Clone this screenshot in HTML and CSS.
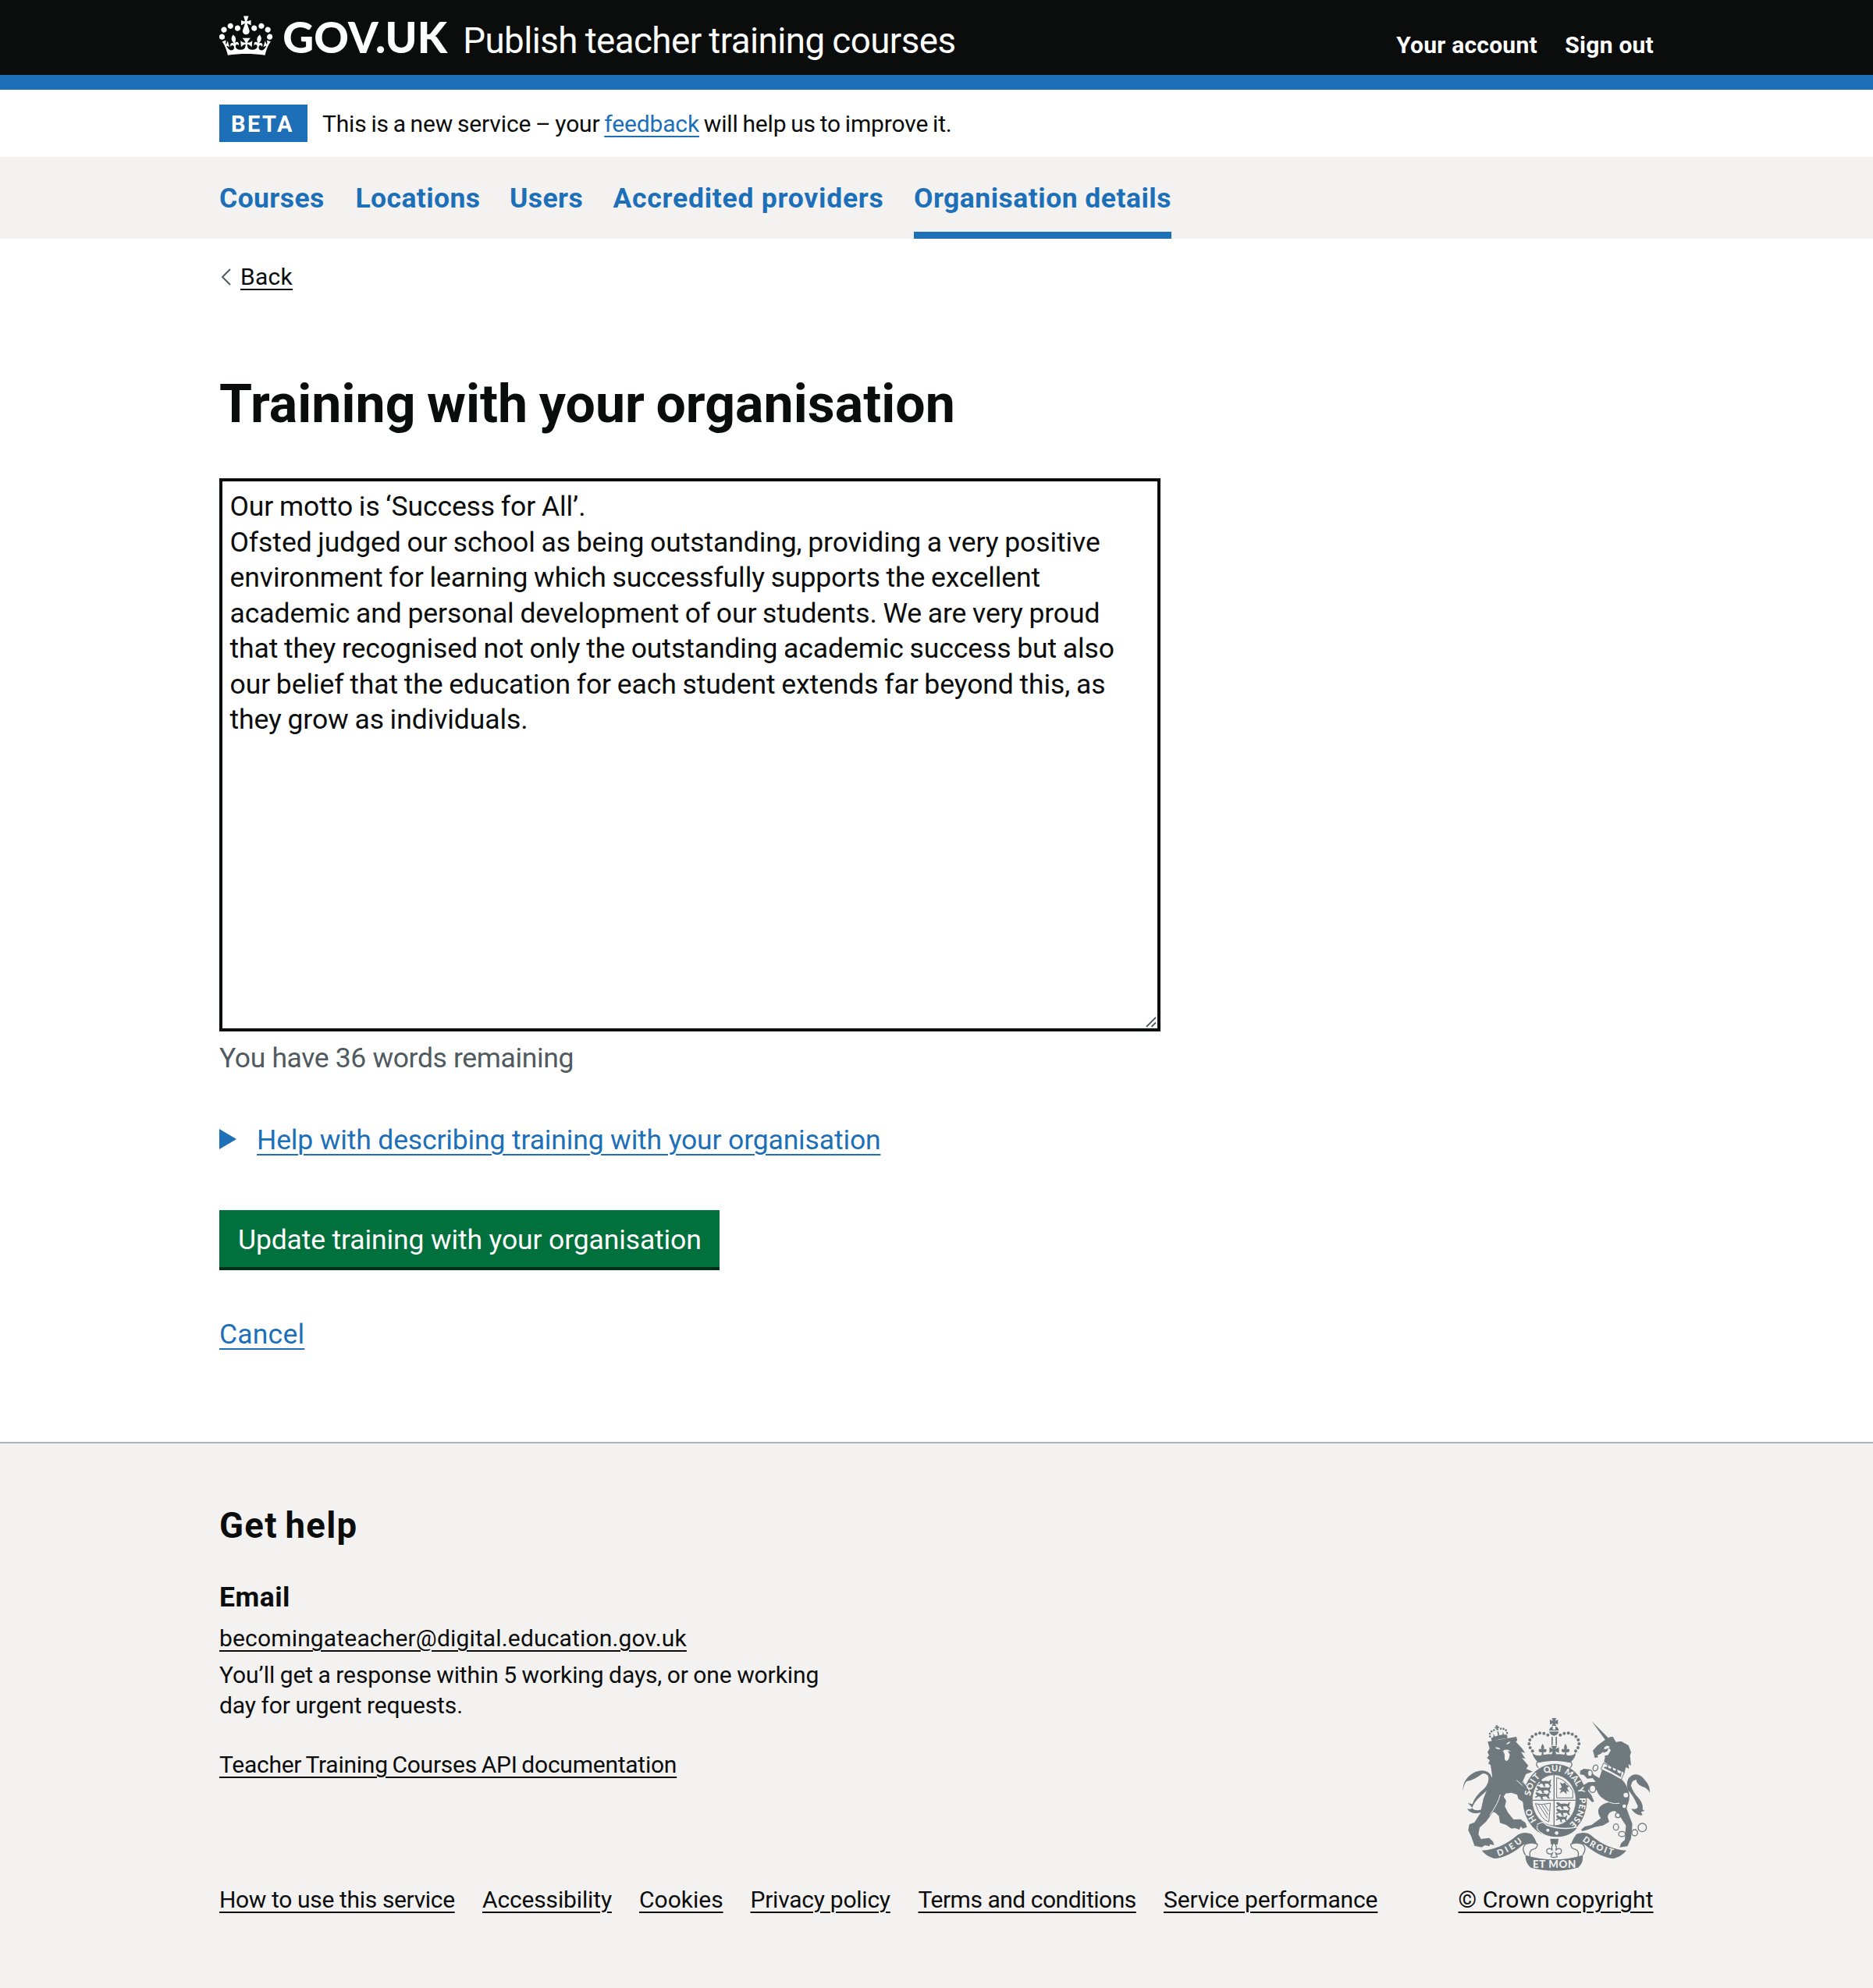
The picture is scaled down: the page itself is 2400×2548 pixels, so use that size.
FILE: index.html
```html
<!DOCTYPE html>
<html lang="en">
<head>
<meta charset="utf-8">
<title>Training with your organisation</title>
<link rel="stylesheet" href="styles.css">
</head>
<body>
<header class="header">
  <div class="container header-inner">
    <svg class="logo" viewBox="0 3 156 34" role="img" aria-label="GOV.UK">
      <path fill="#fff" d="M6.7 12.2c1 .4 2.1-.1 2.5-1s-.1-2.1-1-2.5c-1-.4-2.1.1-2.5 1-.4 1 0 2.1 1 2.5m-4.3 2.5c1 .4 2.1-.1 2.5-1s-.1-2.1-1-2.5c-1-.4-2.1.1-2.5 1-.5 1 0 2.1 1 2.5m-1.3 4.8c1 .4 2.1-.1 2.5-1s-.1-2.1-1-2.5c-1-.4-2.1.1-2.5 1-.4 1 0 2.1 1 2.5m10.4-5.8c1 .4 2.1-.1 2.5-1s-.1-2.1-1-2.5c-1-.4-2.1.1-2.5 1s0 2.1 1 2.5m17.4-1.5c-1 .4-2.1-.1-2.5-1s.1-2.1 1-2.5c1-.4 2.1.1 2.5 1 .5 1 0 2.1-1 2.5m4.3 2.5c-1 .4-2.1-.1-2.5-1s.1-2.1 1-2.5c1-.4 2.1.1 2.5 1 .5 1 0 2.1-1 2.5m1.3 4.8c-1 .4-2.1-.1-2.5-1s.1-2.1 1-2.5c1-.4 2.1.1 2.5 1 .4 1 0 2.1-1 2.5m-10.4-5.8c-1 .4-2.1-.1-2.5-1s.1-2.1 1-2.5c1-.4 2.1.1 2.5 1s0 2.1-1 2.5m-5.3-4.9 2.4 1.3V6.5l-2.4.8c-.1-.1-.1-.1-.2-.1s1-3.400 1-3.400h-3.400l1 3.400c-.1.1-.2.1-.2.1-.1.1-2.400-.7-2.400-.7v3.500L17 8.800c-.1.1 0 .2.1.3l-1.400 4.200c-.1.2-.1.4-.1.7 0 1.100.8 2.100 1.900 2.200h.8c1.100-.2 1.900-1.100 1.900-2.200 0-.2 0-.4-.1-.7l-1.400-4.200c.1-.1.2-.2.1-.3m-1 20.300c4.600 0 8.900.3 12.800.9 1.100-4.600 2.400-7.200 3.800-9.100l-2.600-.9c.3 1.300.3 1.900 0 2.800-.4-.4-.8-1.200-1.100-2.400l-1.200 4.200c.8-.5 1.300-.9 2-.9-1.200 2.600-2.700 3.200-3.600 3-1.200-.2-1.700-1.300-1.500-2.200.3-1.300 1.600-1.600 2.200-.1 1.200-2.400-.8-3.100-2.100-2.400 1.900-1.900 2.200-3.600.6-5.700-2.200 1.700-2.200 3.300-1.200 5.600-1.300-1.500-3.300-.7-2.500 1.700.9-1.500 2.100-.5 2 .8-.2 1.200-1.700 2.100-3.700 2-2.800-.2-3-2.200-3-3.700.7-.1 1.900.5 3 2l.4-4.400c-1.100 1.200-2.200 1.400-3.300 1.400.4-1.200 2.100-3.100 2.100-3.100h-5.500s1.800 1.900 2.100 3.100c-1.100 0-2.200-.3-3.300-1.400l.4 4.400c1.100-1.500 2.200-2.100 3-2-.1 1.600-.2 3.500-3 3.700-1.900.2-3.500-.8-3.700-2-.2-1.300 1-2.300 2-.8.7-2.300-1.300-3.100-2.500-1.700 1-2.300 1-4-1.200-5.600-1.600 2.100-1.300 3.800.6 5.700-1.300-.7-3.200 0-2.100 2.400.6-1.500 1.900-1.200 2.200.1.2.9-.3 2-1.500 2.200-.9.2-2.400-.5-3.600-3 .7 0 1.200.4 2 .9l-1.200-4.200c-.3 1.200-.7 2-1.100 2.400-.3-.8-.2-1.500 0-2.800l-2.600.9c1.400 1.900 2.700 4.600 3.800 9.100 3.900-.6 8.200-.9 12.800-.9"/>
      <text class="logotype" x="42.4" y="28.6" textLength="110.2">GOV.UK</text>
    </svg>
    <a class="service-name" href="#">Publish teacher training courses</a>
    <nav class="account">
      <a href="#">Your account</a>
      <a href="#">Sign out</a>
    </nav>
  </div>
</header>

<div class="container phase-banner">
  <strong class="tag">BETA</strong>
  <p class="phase-text">This is a new service – your <a class="link" href="#">feedback</a> will help us to improve it.</p>
</div>

<nav class="primary-nav">
  <ul class="container primary-list">
    <li class="nav-courses"><a href="#">Courses</a></li>
    <li class="nav-locations"><a href="#">Locations</a></li>
    <li class="nav-users"><a href="#">Users</a></li>
    <li class="nav-providers"><a href="#">Accredited providers</a></li>
    <li class="nav-organisation current"><a href="#">Organisation details</a></li>
  </ul>
</nav>

<main class="container main">
  <div class="back">
    <svg class="chevron" viewBox="0 0 14 22"><path d="M13 1 3 11l10 10"/></svg>
    <a class="link" href="#">Back</a>
  </div>
  <h1 class="title">Training with your organisation</h1>
  <div class="field">
    <textarea class="textarea" aria-label="Training with your organisation">Our motto is ‘Success for All’.
Ofsted judged our school as being outstanding, providing a very positive
environment for learning which successfully supports the excellent
academic and personal development of our students. We are very proud
that they recognised not only the outstanding academic success but also
our belief that the education for each student extends far beyond this, as
they grow as individuals.</textarea>
    <svg class="grip" viewBox="0 0 14 14"><path d="M1 13 13 1M7.500 13 13 7.500"/></svg>
  </div>
  <p class="hint">You have 36 words remaining</p>
  <div class="details">
    <svg class="arrow" viewBox="0 0 22 26"><path d="M0 0 22 13 0 26z"/></svg>
    <a class="link" href="#">Help with describing training with your organisation</a>
  </div>
  <button class="button">Update training with your organisation</button>
  <p class="cancel"><a class="link" href="#">Cancel</a></p>
</main>

<footer class="footer">
  <div class="container">
    <h2 class="help-title">Get help</h2>
    <h3 class="help-subtitle">Email</h3>
    <p class="help-email"><a class="link" href="#">becomingateacher@digital.education.gov.uk</a></p>
    <p class="help-text">You’ll get a response within 5 working days, or one working<br>day for urgent requests.</p>
    <div class="footer-meta">
      <div class="meta-main">
        <p class="api"><a class="link" href="#">Teacher Training Courses API documentation</a></p>
        <ul class="footer-links">
          <li class="f-how"><a class="link" href="#">How to use this service</a></li>
          <li class="f-access"><a class="link" href="#">Accessibility</a></li>
          <li class="f-cookies"><a class="link" href="#">Cookies</a></li>
          <li class="f-privacy"><a class="link" href="#">Privacy policy</a></li>
          <li class="f-terms"><a class="link" href="#">Terms and conditions</a></li>
          <li class="f-perf"><a class="link" href="#">Service performance</a></li>
        </ul>
      </div>
      <div class="meta-crown">
        <svg class="crest" viewBox="85 55 750 600">
          <defs>
            <path id="garter" d="M455 490A95 112 0 0 1 360 378A95 112 0 0 1 455 266A95 112 0 0 1 550 378A95 112 0 0 1 455 490"/>
            <path id="ribbon-left" d="M238 592Q290 575 345 526"/>
            <path id="ribbon-right" d="M560 533Q610 572 690 592"/>
            <g id="bead-arc"><circle cx="428" cy="126" r="6"/><circle cx="413" cy="120" r="6"/><circle cx="397" cy="119" r="6"/><circle cx="382" cy="123" r="6"/><circle cx="368" cy="132" r="6"/><circle cx="359" cy="145" r="6"/><circle cx="356" cy="160" r="6"/><circle cx="360" cy="175" r="6"/><circle cx="369" cy="188" r="6"/>
              <path d="M408 160q-9 12-4 22q-9-6-12 4q4 10 14 6l-3 12h10l-3-12q10 4 14-6q-3-10-12-4q5-10-4-22z"/></g>
            <g id="passant"><path d="M2 8q-4-6 2-8l6 3 5 4q12-3 22 1 3-9 9-8-4 4-3 10l-2 8 5 8h-7l-5-9-11 1-1 6 4 5h-8l-3-10-6-2-7 6-4-4 8-5z"/></g>
          </defs>
          <!-- centre crown -->
          <g class="ink">
            <path d="M443 61h18l-5 11 11-5v19l-11-5 5 10h-18l5-10-12 5V67l12 5zM433 109q2-14 14-16v12h10V93q12 2 13 16zM433 113h37q-3 14-18 16-15-2-19-16z"/>
            <path d="M442 133h5v32h-5zM458 133h5v32h-5zM440 168h24l-7 12 14-7v22l-14-6 5 14h-20l5-14-13 6v-22l13 7z"/>
            <use href="#bead-arc"/><use href="#bead-arc" transform="translate(904) scale(-1 1)"/>
            <path d="M368 192q8 16 36 12 26-8 48-2 24-6 50 2 26 4 34-12-2 24-22 40-62-14-122 0-20-16-24-40z"/>
          </g>
          <path class="line" d="M392 252q-12-10-5-21 66-16 130 0 9 10-4 21"/>
          <!-- lion -->
          <g class="ink">
            <path d="M197 152l22-4 88-15 4 14-6 5 24 26 12 17-16-4 17 27-14-4 25 30-8 12 25 11-26 9-12 27 24 30 18 31-3 32-10 8-10-8-8 4-12-18-16-10-5-16-22-8-22 3-8 12 10 16-5 22 11 22 22 28 28-1 18 14 6 16-16 6-8-8-6 12-16-6-14 2-20-14-24-8-4-26-12-12-10-4-28 38-24 22-5 26 10 18 32-4 14 14 5 14-16-4-2 8-18-4-12 8-28-6-12-34-12-26 4-22 20-8 22-34 12-56 18-46 16-42-6-42-9-6 6-12-11-10 8-10-6-12 8-14z"/>
            <path d="M186 418q-50 22-68-8 22 4 18-6l-15-16 17 4q10-32 46-60 22-26 14-50-12-12-24-6-30 24-58 28-14 14-13 38-6-30 22-58 30-26 62-20 34 10 22 52-10 22-38 44-28 24-34 48 16 14 43 2z"/>
            <g transform="rotate(-12 240 130)"><path d="M208 132q34-9 64 0l-2 14q-30-6-60 0zM235 88h9l-2 6 6-1v7l-6-1 2 8h-9l2-8-6 1v-7l6 1zM237 112h5v20h-5zM221 116l4 16h-7zM258 116l3 16h-7z"/>
              <circle cx="226" cy="104" r="4"/><circle cx="216" cy="107" r="4"/><circle cx="208" cy="114" r="4"/><circle cx="206" cy="125" r="4"/><circle cx="253" cy="104" r="4"/><circle cx="263" cy="107" r="4"/><circle cx="271" cy="114" r="4"/><circle cx="273" cy="125" r="4"/></g>
          </g>
          <path class="paper" d="M225 174q12-3 21 6-12 4-21-6zM267 163q9-12 17-11-4 10-17 11zM248 188q8 4 12-4 16-4 26 6l-12-2 8 14-4 16q-8 16-16 1v-16l-4-12z"/>
          <path class="cut" d="M245 355q-6 30-40 80M308 300l24 22 20 30"/>
          <!-- unicorn -->
          <g class="ink">
            <path d="M597 74l72 72-12 10z"/>
            <path d="M678 133l12 20 20-3 28 16 10 26-4 14 4 38-10-6 2 18-12-6-6 24q-36-16-78-44l4-20q-8-10-6-20-12 12-24 14l4 8-14 2-3-14-4-14 18-20 28-20 20-12z"/>
            <path d="M637 258q40 16 74 38 26 26 30 60 2 30-12 48l24 64-5 56-14 30-30 4 6-16 14-12 4-56-26-40-16-16q-26 2-28 24l6 18-24 14-32 6-26 10-22 6-4-6 14-12 26-6 36-26q-18-26-4-44 12-14 38-18-42-14-50-46l-26-8-8 10 14 18 10 24-8 2-14-14-20-6-4-20 6-26 18-10 28-2-12-14-20 2-14-14-14-2 0-14 14-8 22 2 18 22 20 12z"/>
            <path d="M790 434q-22 4-42-24 26 4 26-10-18-42-38-62-12-40 14-56 28-14 52 18 20 22 18 48-10-20-30-24-22-10-22-26-18 2-20 24 8 26 30 48 18 22 14 42l8 6-14 4 6 12-18 6z"/>
          </g>
          <path class="paper" d="M644 176q10-14 22-4-6 8-20 10zM632 199l24-10 6-14 8 10-10 18-18 4z"/>
          <path class="collar" d="M642 234q40 18 80 36l-12 28q-38-24-78-40z"/>
          <path class="ink" d="M648 247l6 4 3-12 4 14 9 3 5-14 4 18 8 4 6-12 4 18 9 4 6-10-3 24q-30-18-66-36z"/>
          <path class="cut" d="M664 385q18 8 40 4"/>
          <g class="link-ring"><ellipse cx="611" cy="253" rx="9" ry="12" transform="rotate(25 611 253)"/><ellipse cx="590" cy="273" rx="9" ry="12"/><ellipse cx="600" cy="333" rx="12" ry="14"/><circle cx="728" cy="357" r="11"/><circle cx="722" cy="400" r="9"/><circle cx="697" cy="435" r="9"/><ellipse cx="690" cy="480" rx="10" ry="12"/><ellipse cx="713" cy="507" rx="13" ry="10"/><ellipse cx="762" cy="502" rx="11" ry="12"/><circle cx="791" cy="482" r="16"/></g>
          <!-- garter and shield -->
          <ellipse class="ink" cx="455" cy="378" rx="123" ry="141"/>
          <ellipse class="shield" cx="452" cy="377" rx="84" ry="98"/>
          <path class="line" d="M452 279v196M368 377h168"/>
          <g class="ink">
            <use href="#passant" transform="translate(392 297) scale(1.100 .95)"/><use href="#passant" transform="translate(384 322) scale(1.250 .95)"/><use href="#passant" transform="translate(380 346) scale(1.250 .95)"/>
            <use href="#passant" transform="translate(460 384) scale(1.200 .95)"/><use href="#passant" transform="translate(460 409) scale(1.200 .95)"/><use href="#passant" transform="translate(460 434) scale(.95)"/>
            <path d="M474 308l12 6 8-6 6 10 10 5-8 8 9 14-12-4 2 13-13-11-15 8 7-14-10-3 12-7z"/>
          </g>
          <path class="fine" d="M462 290q40 10 62 52v26h-62zM380 390q20 6 58-2l-6 72q-30-6-52-70zM392 394l34 52M403 393l26 40M414 392l17 26"/>
          <path class="cut" d="M330 306q22 14 30 46"/>
          <path class="ink" d="M306 310l30 14 30 62-2 14-14-2-10 6z"/>
          <g class="motto">
            <text><textPath href="#garter" startOffset="81">HO</textPath></text>
            <text><textPath href="#garter" startOffset="180" textLength="84">SOIT</textPath></text>
            <text><textPath href="#garter" startOffset="285" textLength="62">QUI</textPath></text>
            <text><textPath href="#garter" startOffset="361" textLength="72">MAL</textPath></text>
            <text><textPath href="#garter" startOffset="440">Y</textPath></text>
            <text><textPath href="#garter" startOffset="478" textLength="112">PENSE</textPath></text>
          </g>
          <path class="strap" d="M388 470q22-16 34 2 60 22 124 8-30 42-90 40-34-2-54-18-22-10-14-32z"/>
          <circle class="paper" cx="428" cy="492" r="6"/><circle class="paper" cx="462" cy="503" r="7"/>
          <path class="fine" d="M388 470q-12 14 4 28M398 474q-8 10 2 22"/>
          <!-- ribbon -->
          <path class="ink" d="M437 525h32l-3 22h-26z"/>
          <path class="fleur" d="M452 540q-14 16-6 30-12-14-22-2-4 16 16 16l6-4-6 14q12 6 24 0l-6-14 6 4q20 0 16-16-10-12-22 2 8-14-6-30z"/>
          <path class="ink" d="M174 570q74-4 138-60 22-14 54-3 12 14 20 36-30-8-54 6-60 50-110 52-30-8-48-31zM730 570q-74-4-138-60-22-14-54-3-12 14-20 36 30-8 54 6 60 50 110 52 30-8 48-31zM342 588q110 34 220 0 4 30-18 48-90 24-182 0-22-20-20-48z"/>
          <path class="line" d="M342 588q-18-26 0-42 24-10 46 0 0 16-18 20-16 6-10 28M562 588q18-26 0-42-24-10-46 0 0 16 18 20 16 6 10 28"/>
          <g class="motto">
            <text><textPath href="#ribbon-left" textLength="108">DIEU</textPath></text>
            <text><textPath href="#ribbon-right" textLength="130">DROIT</textPath></text>
            <text class="motto-large" x="370" y="637" textLength="166">ET MON</text>
          </g>
        </svg>
        <a class="link copyright" href="#">© Crown copyright</a>
      </div>
    </div>
  </div>
</footer>
</body>
</html>
```
FILE: styles.css
```css
* { box-sizing: border-box; }
body {
  margin: 0;
  background: #fff;
  color: #0b0c0c;
  font: 400 30px/38.3px Roboto, "Liberation Sans", sans-serif;
}
p, h1, h2, h3, ul { margin: 0; padding: 0; }
ul { list-style: none; }
a { color: inherit; text-decoration: none; }
.container { width: 1838px; margin: 0 auto; }
.link {
  text-decoration: underline;
  text-decoration-thickness: 2px;
  text-underline-offset: 5px;
}

.header { height: 115px; background: #0b0c0c; border-bottom: 19px solid #1d70b8; color: #fff; }
.header-inner { display: flex; align-items: flex-start; }
.logo { width: 298.700px; height: 65.100px; margin-top: 18.700px; flex: none; overflow: visible; }
.logotype { font: 900 28.800px Lato, sans-serif; fill: #fff; }
.service-name { margin: 28px 0 0 13.500px; font-size: 45.700px; line-height: 50px; letter-spacing: -.56px; word-spacing: -1px; }
.account { display: flex; gap: 35.500px; margin: 40px 0 0 auto; font-weight: 700; line-height: 36px; letter-spacing: .24px; }

.phase-banner { height: 86px; display: flex; align-items: flex-start; padding-top: 19px; }
.tag { width: 113px; height: 48px; padding-left: 15px; background: #1d70b8; color: #fff; font-size: 29px; line-height: 50px; letter-spacing: 2.500px; }
.phase-text { margin: 4.500px 0 0 19px; line-height: 40px; letter-spacing: -.15px; word-spacing: -1.500px; }
.phase-text .link { color: #1d70b8; }

.primary-nav { background: #f3f2f1; }
.primary-list { display: flex; gap: 38.500px; height: 105px; font-size: 35.500px; font-weight: 700; line-height: 106px; letter-spacing: .4px; color: #1d70b8; white-space: nowrap; }
.nav-courses { width: 136px; }
.nav-locations { width: 159px; }
.nav-users { width: 94px; }
.nav-providers { width: 347px; letter-spacing: .75px; }
.nav-organisation { width: 330px; letter-spacing: .48px; }
.current { box-shadow: inset 0 -9px #1d70b8; }

.main { height: 1542px; padding-top: 28.500px; font-size: 35.500px; line-height: 46px; }
.back { display: flex; font-size: 30px; line-height: 40px; letter-spacing: .3px; }
.chevron { width: 14px; height: 22px; margin: 9px 12px 0 1px; fill: none; stroke: #505a5f; stroke-width: 2; }
.title { margin-top: 103.500px; font-size: 68px; line-height: 80px; letter-spacing: .05px; word-spacing: -2.500px; }
.field { position: relative; width: 1206px; height: 708.500px; margin-top: 55px; }
.textarea {
  display: block; width: 100%; height: 100%;
  border: 4px solid #0b0c0c; border-radius: 0; padding: 10px 8px 8px 9.500px;
  resize: none; outline: none; overflow: hidden; white-space: pre;
  background: #fff; color: #0b0c0c;
  font: 400 35.500px/45.500px Roboto, "Liberation Sans", sans-serif; letter-spacing: -.08px; word-spacing: -1px;
}
.grip { position: absolute; right: 5px; bottom: 5px; width: 14px; height: 14px; fill: none; stroke: #505a5f; stroke-width: 1.800; }
.hint { margin-top: 11px; color: #505a5f; letter-spacing: -.36px; }
.details { display: flex; margin-top: 59px; color: #1d70b8; letter-spacing: -.15px; }
.details .link, .cancel .link { text-underline-offset: 6px; }
.arrow { width: 22px; height: 26px; margin: 9px 26px 0 0; fill: #1d70b8; }
.button {
  display: block; width: 641px; height: 77px; margin-top: 67.500px; padding: 3px 0 3px 24px;
  border: 0; box-shadow: inset 0 -4px #002d18; background: #00703c; color: #fff; text-align: left;
  font: 400 35.500px/71px Roboto, "Liberation Sans", sans-serif; letter-spacing: -.13px;
}
.cancel { margin-top: 58.500px; color: #1d70b8; letter-spacing: .2px; }

.footer { height: 700px; border-top: 2px solid #b1b4b6; background: #f3f2f1; padding-top: 79px; }
.help-title { font-size: 45.500px; line-height: 54px; letter-spacing: 1.300px; word-spacing: -3px; }
.help-subtitle { margin-top: 41px; font-size: 35.500px; line-height: 46px; letter-spacing: .5px; }
.help-email { margin-top: 11px; letter-spacing: .16px; }
.help-text { margin-top: 9px; letter-spacing: -.1px; word-spacing: -.8px; }
.footer-meta { display: flex; justify-content: space-between; align-items: flex-end; height: 249px; }
.meta-main { display: flex; flex-direction: column; justify-content: space-between; height: 211px; }
.api { letter-spacing: -.24px; word-spacing: -1.500px; }
.footer-links { display: flex; gap: 35px; white-space: nowrap; letter-spacing: -.3px; }
.f-how { width: 302px; letter-spacing: -.35px; }
.f-access { width: 166px; letter-spacing: -.15px; }
.f-cookies { width: 107.500px; letter-spacing: 0; }
.f-privacy { width: 180px; letter-spacing: -.25px; }
.f-terms { width: 279.500px; letter-spacing: -.48px; }
.f-perf { width: 274px; letter-spacing: -.12px; }
.meta-crown { display: flex; flex-direction: column; width: 250.500px; }
.copyright { margin-top: 16px; white-space: nowrap; letter-spacing: .1px; }

.crest { display: block; width: 250px; height: 200px; }
.ink { fill: #707a7e; }
.paper { fill: #f3f2f1; }
.line { fill: none; stroke: #707a7e; stroke-width: 4; }
.fine { fill: none; stroke: #707a7e; stroke-width: 3; }
.cut { fill: none; stroke: #f3f2f1; stroke-width: 3; }
.shield { fill: #f3f2f1; stroke: #707a7e; stroke-width: 2; }
.collar { fill: #f3f2f1; stroke: #707a7e; stroke-width: 3; }
.strap { fill: #707a7e; stroke: #f3f2f1; stroke-width: 4; }
.fleur { fill: #f3f2f1; stroke: #707a7e; stroke-width: 4; }
.link-ring { fill: #f3f2f1; stroke: #707a7e; stroke-width: 4; }
.motto { font: 900 33px Lato, sans-serif; fill: #f3f2f1; }
.motto-large { font-size: 40px; }
```
